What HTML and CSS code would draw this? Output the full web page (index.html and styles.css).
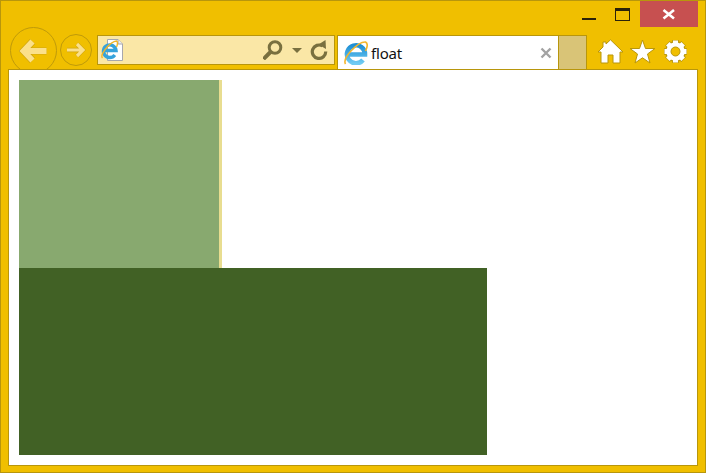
FILE: index.html
```html
<!doctype html>
<html>
<head>
	<title>float</title>
	<meta charset="utf-8" />
	<link rel="stylesheet" href="styles.css">
</head>

<body>
	<div class="window">
		<div class="titlebar">
			<div class="min-btn"><div class="min-line"></div></div>
			<div class="max-btn"><div class="max-box"></div></div>
			<div class="close-btn">
				<svg width="14" height="12" viewBox="0 0 14 12"><path d="M1.500 2 L12 10.500 M12 2 L1.500 10.500" stroke="#fff" stroke-width="2.600" fill="none"/></svg>
			</div>
		</div>

		<div class="toolbar">
			<div class="nav-back">
				<svg width="30" height="26" viewBox="0 0 30 26">
					<path d="M13.500 3.500 L4.500 13 L13.500 22.500 M5 13 L27.500 13" stroke="#cfa510" stroke-width="7.200" fill="none"/>
					<path d="M13.500 3.500 L4.500 13 L13.500 22.500 M5 13 L27.500 13" stroke="#fbe08a" stroke-width="5.800" fill="none"/>
				</svg>
			</div>
			<div class="nav-forward">
				<svg width="20" height="16" viewBox="0 0 20 16">
					<path d="M11 2 L17 8 L11 14 M16 8 L1 8" stroke="#cfa510" stroke-width="4.400" fill="none"/>
					<path d="M11 2 L17 8 L11 14 M16 8 L1 8" stroke="#fbe08a" stroke-width="3.200" fill="none"/>
				</svg>
			</div>

			<div class="address">
				<div class="page-icon">
					<svg width="24" height="26" viewBox="0 0 24 26">
						<path d="M7.500 2.500 H18 L22.500 7 V23.500 H7.500 Z" fill="#fff" stroke="#a7a7ad"/>
						<path d="M18 2.500 V7 H22.500" fill="#eee" stroke="#a7a7ad"/>
						<path d="M4 13.500 H16 A6.300 6.300 0 1 0 14.800 18" fill="none" stroke="#35a3dc" stroke-width="3.400"/>
						<path d="M2.500 21 C-0.500 18 10 4.500 16.500 4 C18 4.500 17.500 8 16.500 10" fill="none" stroke="#f0b429" stroke-width="1.400"/>
					</svg>
				</div>
				<div class="address-space"></div>
				<svg class="search-icon" width="20" height="20" viewBox="0 0 20 20"><circle cx="12" cy="7.500" r="5.800" fill="none" stroke="#79703f" stroke-width="3"/><path d="M8 11.500 L0.500 19" stroke="#79703f" stroke-width="4"/></svg>
				<div class="arrow-down"></div>
				<svg class="refresh-icon" width="18" height="20" viewBox="0 0 18 20"><path d="M12.500 6 A6.700 6.700 0 1 0 15.700 11.500" fill="none" stroke="#79703f" stroke-width="3.200"/><path d="M8.500 4.500 L15.500 0 L16 9 Z" fill="#79703f"/></svg>
			</div>

			<div class="tab">
				<svg class="tab-icon" width="24" height="24" viewBox="0 0 24 24">
					<defs>
						<linearGradient id="egrad" x1="0" y1="0" x2="0" y2="1">
							<stop offset="0" stop-color="#1f8fd4"/>
							<stop offset="1" stop-color="#6fcbf3"/>
						</linearGradient>
					</defs>
					<path d="M3 13.500 H21 A9 9 0 1 0 19 19" fill="none" stroke="url(#egrad)" stroke-width="4.600"/>
					<path d="M1.500 23 C-2 17 14 0.500 21.500 1 C24 2.500 23 7 21.500 10" fill="none" stroke="#f3b52c" stroke-width="1.600"/>
				</svg>
				<span class="tab-title">float</span>
				<svg class="tab-close" width="12" height="12" viewBox="0 0 12 12"><path d="M1.500 1.500 L10.500 10.500 M10.500 1.500 L1.500 10.500" stroke="#a3a3a3" stroke-width="2.400" fill="none"/></svg>
			</div>
			<div class="new-tab"></div>

			<div class="tools">
				<svg class="tool-home" width="27" height="25" viewBox="0 0 27 25"><path d="M13.500 0.800 L26 13 H23 V24 H16 V16 H11 V24 H4 V13 H1 L6 8 V3 H9 V5 Z" fill="#fff" stroke="#b8960c"/></svg>
				<svg class="tool-star" width="27" height="25" viewBox="0 0 27 25"><path d="M13.500 1 L16.500 9.500 H26 L18.500 15 L21 24 L13.500 18.800 L6 24 L8.500 15 L1 9.500 H10.500 Z" fill="#fff" stroke="#b8960c"/></svg>
				<svg class="tool-gear" width="25" height="25" viewBox="0 0 25 25"><path d="M12.500 1 V24 M1 12.500 H24 M4.400 4.400 L20.600 20.600 M20.600 4.400 L4.400 20.600" stroke="#b8960c" stroke-width="6.500"/><circle cx="12.500" cy="12.500" r="7.500" fill="none" stroke="#b8960c" stroke-width="6"/><path d="M12.500 1.500 V23.500 M1.500 12.500 H23.500 M4.800 4.800 L20.200 20.200 M20.200 4.800 L4.800 20.200" stroke="#fff" stroke-width="5"/><circle cx="12.500" cy="12.500" r="7" fill="none" stroke="#fff" stroke-width="4.500"/><circle cx="12.500" cy="12.500" r="4.500" fill="#f0bf00" stroke="#b8960c"/></svg>
			</div>
		</div>

		<div class="content">
			<div class="box-light"></div>
			<div class="box-dark"></div>
		</div>
	</div>
</body>
</html>
```

FILE: styles.css
```css
html, body {
	margin:0;
	padding:0;
}

body {
	font-family:"Noto Sans", "Open Sans", sans-serif;
}

.window {
	box-sizing:border-box;
	width:706px;
	height:473px;
	background-color:#f0bf00;
	border:1px solid #b8960c;
	padding:0 7px 8px 7px;
	display:flex;
	flex-direction:column;
	overflow:hidden;
}

.titlebar {
	height:26px;
	display:flex;
	justify-content:flex-end;
	flex-shrink:0;
}

.min-btn, .max-btn {
	display:flex;
	justify-content:center;
}

.min-btn {
	width:30px;
	margin-right:11px;
	padding-top:17px;
	box-sizing:border-box;
}

.min-line {
	width:14px;
	height:2px;
	background-color:#2b2309;
}

.max-btn {
	width:26px;
	margin-right:-1px;
	padding-top:7px;
	box-sizing:border-box;
	justify-content:flex-start;
}

.max-box {
	box-sizing:border-box;
	width:15px;
	height:13px;
	border:1px solid #2b2309;
	border-top-width:3px;
}

.close-btn {
	width:58px;
	height:26px;
	background-color:#c75050;
	display:flex;
	align-items:center;
	justify-content:center;
}

.toolbar {
	height:42px;
	margin:0 -7px;
	display:flex;
	flex-shrink:0;
	position:relative;
}

.nav-back {
	box-sizing:border-box;
	width:47px;
	height:47px;
	margin-left:9px;
	border:1px solid #bf9a0a;
	border-radius:50%;
	display:flex;
	align-items:center;
	justify-content:center;
	flex-shrink:0;
}

.nav-forward {
	box-sizing:border-box;
	width:32px;
	height:32px;
	margin:7px 0 0 3px;
	border:1px solid #bf9a0a;
	border-radius:50%;
	display:flex;
	align-items:center;
	justify-content:center;
	flex-shrink:0;
}

.address {
	box-sizing:border-box;
	width:238px;
	height:30px;
	margin:8px 0 0 5px;
	background-color:#fae7a6;
	border:1px solid #b8960c;
	display:flex;
	align-items:center;
}

.page-icon {
	width:24px;
	height:26px;
	margin-left:2px;
}

.address-space {
	flex:1;
}

.search-icon {
	margin-right:9px;
}

.arrow-down {
	width:0;
	height:0;
	border-left:5px solid transparent;
	border-right:5px solid transparent;
	border-top:5px solid #79703f;
	margin-right:8px;
}

.refresh-icon {
	margin-right:6px;
}

.tab {
	box-sizing:border-box;
	width:222px;
	height:35px;
	margin:8px 0 0 2px;
	background-color:#fff;
	border:1px solid #b8960c;
	border-bottom:none;
	display:flex;
	align-items:center;
	padding:0 6px;
}

.tab-icon {
	margin-right:3px;
}

.tab-title {
	flex:1;
	font-size:15px;
	letter-spacing:-0.2px;
	color:#111;
}

.new-tab {
	box-sizing:border-box;
	width:29px;
	height:35px;
	margin:8px 0 0 -1px;
	background-color:#d9c477;
	border:1px solid #b8960c;
	border-bottom:none;
}

.tools {
	display:flex;
	margin:12px 0 0 10px;
	align-items:flex-start;
}

.tool-star {
	margin-left:5px;
}

.tool-gear {
	margin-left:7px;
}

.content {
	box-sizing:border-box;
	flex:1;
	background-color:#fff;
	border:1px solid #b8960c;
	padding:10px;
	position:relative;
}

.box-light {
	width:200px;
	height:188px;
	background-color:#88a96f;
	border-right:3px solid #e8dd90;
}

.box-dark {
	width:468px;
	height:187px;
	background-color:#416125;
}
```
